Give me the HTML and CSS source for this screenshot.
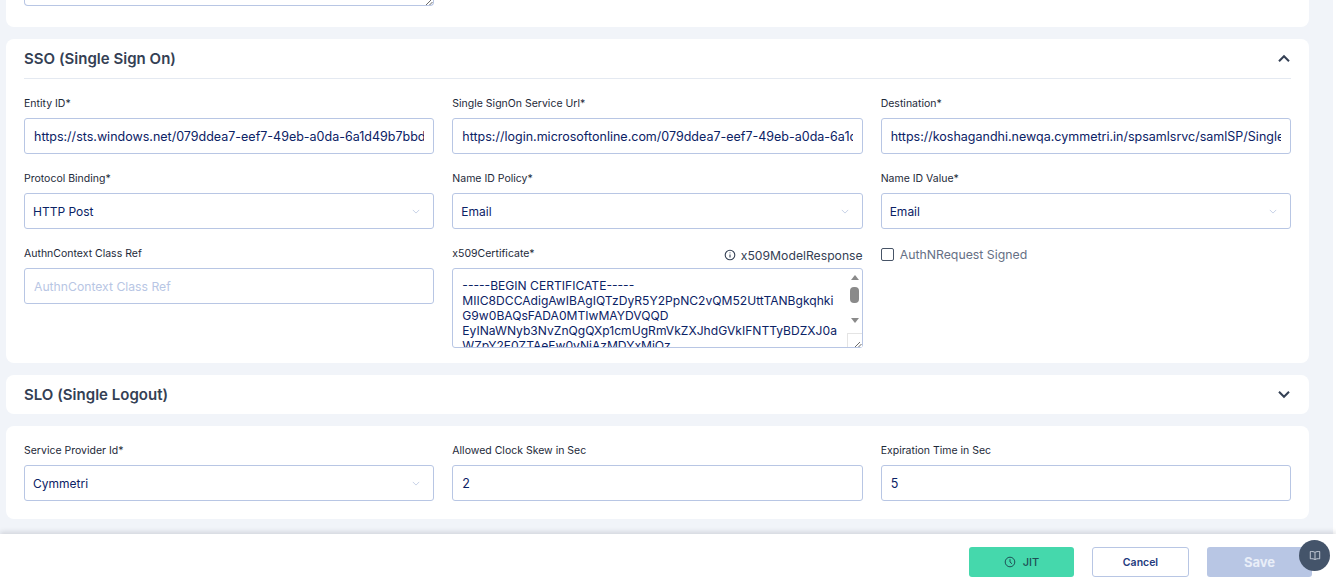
FILE: index.html
```html
<!DOCTYPE html>
<html lang="en">
<head>
    <meta charset="UTF-8">
    <meta name="viewport" content="width=device-width, initial-scale=1.0">
    <title>SAML configuration</title>
    <link rel="stylesheet" href="styles.css">
</head>
<body>
    <div class="page">
        <main class="content">
            <!-- bottom of the previous card, scrolled away -->
            <section class="card card-cut">
                <div class="cut-area">
                    <svg class="grip" viewBox="0 0 8 6"><path d="M1 6l5-5M4.500 6 7.500 3"/></svg>
                </div>
            </section>

            <!-- SSO -->
            <section class="card card-sso">
                <div class="card-head head-line">
                    <h2>SSO (Single Sign On)</h2>
                    <svg class="caret" viewBox="0 0 14 9"><path d="M2 7.200 7 2.200l5 5"/></svg>
                </div>
                <div class="fields">
                    <div class="field">
                        <label>Entity ID*</label>
                        <input type="text" value="https://sts.windows.net/079ddea7-eef7-49eb-a0da-6a1d49b7bbdd/">
                    </div>
                    <div class="field">
                        <label>Single SignOn Service Url*</label>
                        <input type="text" value="https://login.microsoftonline.com/079ddea7-eef7-49eb-a0da-6a1d49b7bbdd/saml2">
                    </div>
                    <div class="field">
                        <label>Destination*</label>
                        <input type="text" value="https://koshagandhi.newqa.cymmetri.in/spsamlsrvc/samlSP/SingleSignOn">
                    </div>
                    <div class="field">
                        <label>Protocol Binding*</label>
                        <div class="select">HTTP Post
                            <svg viewBox="0 0 10 6"><path d="M1 1l4 4 4-4"/></svg>
                        </div>
                    </div>
                    <div class="field">
                        <label>Name ID Policy*</label>
                        <div class="select">Email
                            <svg viewBox="0 0 10 6"><path d="M1 1l4 4 4-4"/></svg>
                        </div>
                    </div>
                    <div class="field">
                        <label>Name ID Value*</label>
                        <div class="select">Email
                            <svg viewBox="0 0 10 6"><path d="M1 1l4 4 4-4"/></svg>
                        </div>
                    </div>
                    <div class="field">
                        <label>AuthnContext Class Ref</label>
                        <input type="text" placeholder="AuthnContext Class Ref">
                    </div>
                    <div class="field">
                        <div class="label-row">
                            <label>x509Certificate*</label>
                            <span class="model-link">
                                <svg viewBox="0 0 12 12"><circle cx="6" cy="6" r="4.800"/><path d="M6 5.400v3M6 3.400v.9"/></svg>
                                x509ModelResponse
                            </span>
                        </div>
                        <div class="cert-box">
                            <textarea class="cert" readonly>-----BEGIN CERTIFICATE-----
MIIC8DCCAdigAwIBAgIQTzDyR5Y2PpNC2vQM52UttTANBgkqhki
G9w0BAQsFADA0MTIwMAYDVQQD
EyINaWNyb3NvZnQgQXp1cmUgRmVkZXJhdGVkIFNTTyBDZXJ0a
WZpY2F0ZTAeFw0yNjAzMDYxMjQz</textarea>
                            <!-- scrollbar and resize corner of the textarea -->
                            <div class="scroll-track">
                                <span class="arrow arrow-up"></span>
                                <span class="thumb"></span>
                                <span class="arrow arrow-down"></span>
                            </div>
                            <div class="resize-corner">
                                <svg class="grip" viewBox="0 0 8 6"><path d="M1 6l5-5M4.500 6 7.500 3"/></svg>
                            </div>
                        </div>
                    </div>
                    <div class="check-field">
                        <span class="checkbox"></span>
                        <span>AuthNRequest Signed</span>
                    </div>
                </div>
            </section>

            <!-- SLO, closed -->
            <section class="card card-slo">
                <div class="card-head">
                    <h2>SLO (Single Logout)</h2>
                    <svg class="caret" viewBox="0 0 14 9"><path d="M2 1.800l5 5 5-5"/></svg>
                </div>
            </section>

            <section class="card card-provider">
                <div class="fields">
                    <div class="field">
                        <label>Service Provider Id*</label>
                        <div class="select">Cymmetri
                            <svg viewBox="0 0 10 6"><path d="M1 1l4 4 4-4"/></svg>
                        </div>
                    </div>
                    <div class="field">
                        <label>Allowed Clock Skew in Sec</label>
                        <input type="text" value="2">
                    </div>
                    <div class="field">
                        <label>Expiration Time in Sec</label>
                        <input type="text" value="5">
                    </div>
                </div>
            </section>
        </main>

        <footer class="actions">
            <button class="btn btn-jit">
                <svg viewBox="0 0 12 12"><circle cx="6" cy="6" r="4.800"/><path d="M6 3.200V6l2 1.800"/></svg>
                JIT
            </button>
            <button class="btn btn-cancel">Cancel</button>
            <button class="btn btn-save">Save</button>
        </footer>

        <div class="help-bubble">
            <svg viewBox="0 0 14 12"><path d="M7 2.400C5.800 1.500 3.800 1.200 1.500 1.400v8.400c2.300-.2 4.300.1 5.500 1 1.200-.9 3.200-1.200 5.500-1V1.400C10.200 1.200 8.200 1.500 7 2.400zM7 2.400v8.400"/></svg>
        </div>
    </div>
</body>
</html>
```

FILE: styles.css
```css
:root{
    --bg-color: #f1f4f9;
    --border-color: #b8c6e4;
    --text-color: #0b2265;
    --title-color: #344054;
    --label-color: #1d2939;
}
*{
    box-sizing: border-box;
}
body{
    margin: 0;
    background-color: #ffffff;
    font-family: Inter, "Noto Sans", sans-serif;
    overflow: hidden;
}
.page{
    position: relative;
    height: 588px;
    overflow: hidden;
}
.content{
    width: 1333px;
    height: 534px;
    padding: 0 24px 0 6px;
    background-color: var(--bg-color);
    display: flex;
    flex-direction: column;
    gap: 12px;
}
.card{
    background-color: #ffffff;
    border-radius: 8px;
}
.card-cut{
    height: 27px;
    padding: 0 18px;
    border-radius: 0 0 8px 8px;
}
.cut-area{
    width: 410px;
    height: 6px;
    border: 1px solid var(--border-color);
    border-top: 0;
    border-radius: 0 0 4px 4px;
    display: flex;
    justify-content: flex-end;
    align-items: flex-end;
}
.grip{
    width: 8px;
    height: 6px;
    fill: none;
    stroke: #6b6b6b;
    stroke-width: 1;
}
.card-sso{
    height: 324px;
    padding: 0 18px;
}
.card-slo{
    height: 39px;
    padding: 0 18px;
}
.card-provider{
    height: 93px;
    padding: 18px 18px 0;
}
.card-head{
    height: 39px;
    display: flex;
    align-items: center;
    justify-content: space-between;
}
.head-line{
    height: 40px;
    border-bottom: 1px solid #e4e9f1;
    margin-bottom: 18px;
}
.card-head h2{
    margin: 0;
    font-size: 15px;
    font-weight: 600;
    letter-spacing: .02px;
    color: var(--title-color);
}
.caret{
    width: 14px;
    height: 9px;
    fill: none;
    stroke: #344054;
    stroke-width: 2;
}
.fields{
    display: grid;
    grid-template-columns: repeat(3, 1fr);
    column-gap: 18px;
    row-gap: 18px;
}
.field{
    display: flex;
    flex-direction: column;
    min-width: 0;
}
.field label{
    display: block;
    height: 14px;
    margin-bottom: 7px;
    font-size: 10.5px;
    line-height: 14px;
    color: var(--label-color);
}
.label-row{
    display: flex;
    justify-content: space-between;
}
.model-link{
    display: flex;
    align-items: center;
    gap: 5px;
    height: 14px;
    margin-top: 1px;
    font-size: 12.200px;
    color: #344054;
}
.model-link svg{
    width: 12px;
    height: 12px;
    fill: none;
    stroke: #344054;
    stroke-width: 1.100;
}
.field input, .select{
    width: 100%;
    height: 36px;
    padding: 0 9px;
    border: 1px solid var(--border-color);
    border-radius: 3px;
    background-color: #ffffff;
    font-family: inherit;
    font-size: 12.500px;
    color: var(--text-color);
    outline: none;
}
.field input::placeholder{
    color: #b8c6e4;
    font-size: 12.200px;
    opacity: 1;
}
.select{
    display: flex;
    align-items: center;
    justify-content: space-between;
    padding: 0 8px;
    font-size: 12px;
}
.select svg{
    width: 8px;
    height: 5px;
    margin-right: 5px;
    fill: none;
    stroke: #c5d0e6;
    stroke-width: 1.200;
}
.cert-box{
    position: relative;
    height: 80px;
}
.cert{
    display: block;
    width: 100%;
    height: 100%;
    padding: 9px 9px 0;
    border: 1px solid var(--border-color);
    border-radius: 3px;
    font-family: inherit;
    font-size: 12.100px;
    line-height: 15px;
    color: var(--text-color);
    overflow: hidden;
    resize: none;
    white-space: pre;
    outline: none;
}
.scroll-track{
    position: absolute;
    top: 7px;
    left: 398px;
    width: 9px;
    height: 48px;
    display: flex;
    flex-direction: column;
    align-items: center;
}
.arrow{
    width: 0;
    height: 0;
    border-left: 4.500px solid transparent;
    border-right: 4.500px solid transparent;
}
.arrow-up{
    border-bottom: 5px solid #8a8a8a;
}
.arrow-down{
    margin-top: 15px;
    border-top: 5px solid #8a8a8a;
}
.thumb{
    width: 9px;
    height: 17px;
    margin-top: 7px;
    border-radius: 4px;
    background-color: #8a8a8a;
}
.resize-corner{
    position: absolute;
    right: 1px;
    bottom: 1px;
    width: 15px;
    height: 14px;
    background-color: #ffffff;
    border-top: 1px solid #e4e4e4;
    border-left: 1px solid #e4e4e4;
    display: flex;
    justify-content: flex-end;
    align-items: flex-end;
}
.check-field{
    display: flex;
    align-items: flex-start;
    gap: 6px;
    padding-top: 1px;
    font-size: 12.300px;
    line-height: 14px;
    color: #667085;
}
.checkbox{
    width: 13px;
    height: 13px;
    border: 1px solid #475467;
    border-radius: 2px;
}
.actions{
    height: 54px;
    padding: 13px 24px 0 0;
    display: flex;
    justify-content: flex-end;
    gap: 18px;
    background-color: #ffffff;
    box-shadow: 0 -2px 5px rgba(16,24,40,.14);
    position: relative;
}
.btn{
    width: 105px;
    height: 30px;
    border: 0;
    border-radius: 3px;
    font-family: inherit;
    font-size: 10.500px;
    font-weight: 600;
    display: flex;
    align-items: center;
    justify-content: center;
    gap: 7px;
}
.btn-jit{
    background-color: #45d8ac;
    color: #1f4f55;
    font-size: 11px;
    font-weight: 500;
}
.btn-jit svg{
    width: 12px;
    height: 12px;
    fill: none;
    stroke: #1f4f55;
    stroke-width: 1;
}
.btn-cancel{
    width: 97px;
    background-color: #ffffff;
    border: 1px solid var(--border-color);
    color: #233a7d;
}
.btn-save{
    background-color: #b8c6e4;
    color: #e9eef8;
    font-size: 13px;
    font-weight: 700;
}
.help-bubble{
    position: absolute;
    left: 1299px;
    top: 540px;
    width: 31px;
    height: 31px;
    border-radius: 50%;
    background-color: #44546a;
    display: flex;
    align-items: center;
    justify-content: center;
}
.help-bubble svg{
    width: 12px;
    height: 11px;
    fill: none;
    stroke: #d5dbe5;
    stroke-width: 1;
}
```
